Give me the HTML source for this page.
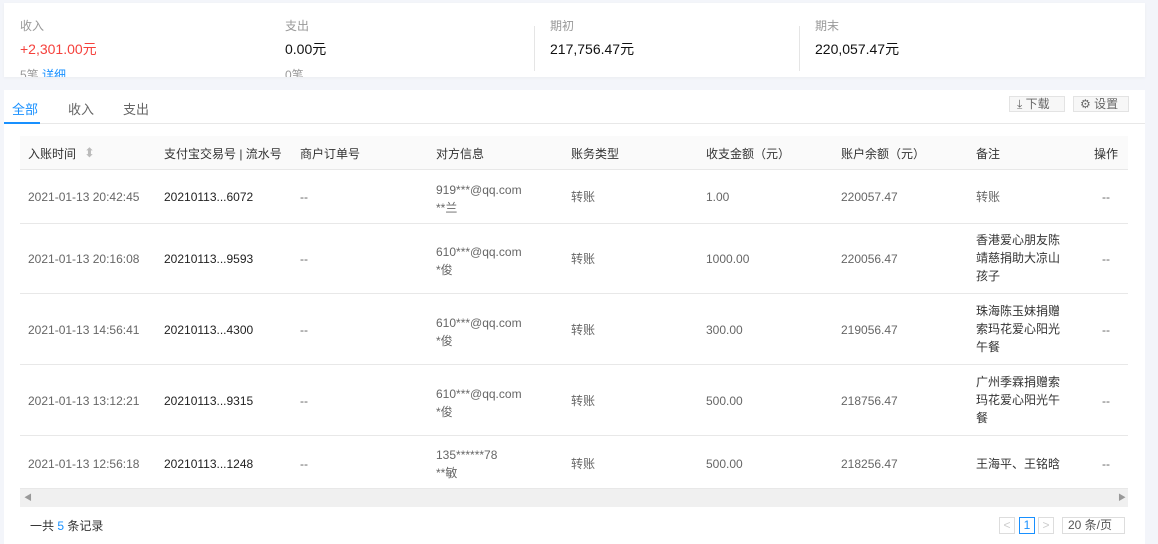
<!DOCTYPE html>
<html><head><meta charset="utf-8"><style>
*{margin:0;padding:0;box-sizing:border-box}
body{width:1158px;height:544px;background:#f3f5fa;font-family:"Liberation Sans","Noto Sans CJK SC",sans-serif;font-size:12px;color:#666;position:relative;overflow:hidden}
.a{position:absolute;white-space:nowrap}
.card{position:absolute;background:#fff}
.lbl{color:#999;font-size:12px}
.val{color:#111;font-size:14px}
.hd{color:#333;font-size:12px}
.k{color:#222}
.line{position:absolute;height:1px;background:#e8e8e8}
</style></head><body>
<div class="card" style="left:4px;top:3px;width:1141px;height:74px;overflow:hidden;box-shadow:0 1px 3px rgba(0,0,0,0.04)">
 <div class="a lbl" style="left:16px;top:14px">收入</div>
 <div class="a val" style="left:16px;top:36px;color:#f5413c">+2,301.00元</div>
 <div class="a lbl" style="left:16px;top:63px">5笔 <span style="color:#1890ff">详细</span></div>
 <div class="a lbl" style="left:281px;top:14px">支出</div>
 <div class="a val" style="left:281px;top:36px">0.00元</div>
 <div class="a lbl" style="left:281px;top:63px">0笔</div>
 <div style="position:absolute;left:530px;top:23px;width:1px;height:45px;background:#e5e5e5"></div>
 <div class="a lbl" style="left:546px;top:14px">期初</div>
 <div class="a val" style="left:546px;top:36px">217,756.47元</div>
 <div style="position:absolute;left:795px;top:23px;width:1px;height:45px;background:#e5e5e5"></div>
 <div class="a lbl" style="left:811px;top:14px">期末</div>
 <div class="a val" style="left:811px;top:36px">220,057.47元</div>
</div>
<div class="card" style="left:4px;top:90px;width:1141px;height:454px"></div>
<div class="a" style="left:12px;top:99px;font-size:13px;color:#1890ff">全部</div>
<div class="a" style="left:68px;top:99px;font-size:13px;color:#666">收入</div>
<div class="a" style="left:123px;top:99px;font-size:13px;color:#666">支出</div>
<div class="line" style="left:4px;top:123px;width:1141px"></div>
<div style="position:absolute;left:4px;top:122px;width:36px;height:2px;background:#1890ff"></div>
<div class="a" style="left:1009px;top:96px;width:56px;height:16px;border:1px solid #e3e3e3;background:#f7f7f7;font-size:12px;line-height:14px;padding-left:7px">⤓ 下载</div>
<div class="a" style="left:1073px;top:96px;width:56px;height:16px;border:1px solid #e3e3e3;background:#f7f7f7;font-size:12px;line-height:14px;padding-left:6px">⚙ 设置</div>
<div style="position:absolute;left:20px;top:136px;width:1108px;height:34px;background:#fafafa;border-bottom:1px solid #e8e8e8"></div>
<div class="a hd" style="left:28px;top:145px">入账时间</div>
<div class="a" style="left:84px;top:145px;color:#bbb;font-size:13px;line-height:16px">⬍</div>
<div class="a hd" style="left:164px;top:145px">支付宝交易号 | 流水号</div>
<div class="a hd" style="left:300px;top:145px">商户订单号</div>
<div class="a hd" style="left:436px;top:145px">对方信息</div>
<div class="a hd" style="left:571px;top:145px">账务类型</div>
<div class="a hd" style="left:706px;top:145px">收支金额（元）</div>
<div class="a hd" style="left:841px;top:145px">账户余额（元）</div>
<div class="a hd" style="left:976px;top:145px">备注</div>
<div class="a hd" style="left:1094px;top:145px">操作</div>

<div class="a" style="left:28px;top:190px">2021-01-13 20:42:45</div><div class="a k" style="left:164px;top:190px">20210113...6072</div><div class="a" style="left:300px;top:190px">--</div>
<div class="a" style="left:436px;top:181px;line-height:18px">919***@qq.com<br>**兰</div><div class="a" style="left:571px;top:188px">转账</div><div class="a" style="left:706px;top:190px">1.00</div><div class="a" style="left:841px;top:190px">220057.47</div><div class="a" style="left:976px;top:188px">转账</div><div class="a" style="left:1102px;top:190px">--</div>
<div class="line" style="left:20px;top:223px;width:1108px"></div>

<div class="a" style="left:28px;top:252px">2021-01-13 20:16:08</div><div class="a k" style="left:164px;top:252px">20210113...9593</div><div class="a" style="left:300px;top:252px">--</div>
<div class="a" style="left:436px;top:243px;line-height:18px">610***@qq.com<br>*俊</div><div class="a" style="left:571px;top:250px">转账</div><div class="a" style="left:706px;top:252px">1000.00</div><div class="a" style="left:841px;top:252px">220056.47</div><div class="a k" style="left:976px;top:231px;line-height:18px;color:#333">香港爱心朋友陈<br>靖慈捐助大凉山<br>孩子</div><div class="a" style="left:1102px;top:252px">--</div>
<div class="line" style="left:20px;top:293px;width:1108px"></div>

<div class="a" style="left:28px;top:323px">2021-01-13 14:56:41</div><div class="a k" style="left:164px;top:323px">20210113...4300</div><div class="a" style="left:300px;top:323px">--</div>
<div class="a" style="left:436px;top:314px;line-height:18px">610***@qq.com<br>*俊</div><div class="a" style="left:571px;top:321px">转账</div><div class="a" style="left:706px;top:323px">300.00</div><div class="a" style="left:841px;top:323px">219056.47</div><div class="a" style="left:976px;top:302px;line-height:18px;color:#333">珠海陈玉妹捐赠<br>索玛花爱心阳光<br>午餐</div><div class="a" style="left:1102px;top:323px">--</div>
<div class="line" style="left:20px;top:364px;width:1108px"></div>

<div class="a" style="left:28px;top:394px">2021-01-13 13:12:21</div><div class="a k" style="left:164px;top:394px">20210113...9315</div><div class="a" style="left:300px;top:394px">--</div>
<div class="a" style="left:436px;top:385px;line-height:18px">610***@qq.com<br>*俊</div><div class="a" style="left:571px;top:392px">转账</div><div class="a" style="left:706px;top:394px">500.00</div><div class="a" style="left:841px;top:394px">218756.47</div><div class="a" style="left:976px;top:373px;line-height:18px;color:#333">广州季霖捐赠索<br>玛花爱心阳光午<br>餐</div><div class="a" style="left:1102px;top:394px">--</div>
<div class="line" style="left:20px;top:435px;width:1108px"></div>

<div class="a" style="left:28px;top:457px">2021-01-13 12:56:18</div><div class="a k" style="left:164px;top:457px">20210113...1248</div><div class="a" style="left:300px;top:457px">--</div>
<div class="a" style="left:436px;top:446px;line-height:18px">135******78<br>**敏</div><div class="a" style="left:571px;top:455px">转账</div><div class="a" style="left:706px;top:457px">500.00</div><div class="a" style="left:841px;top:457px">218256.47</div><div class="a" style="left:976px;top:455px;color:#333">王海平、王铭晗</div><div class="a" style="left:1102px;top:457px">--</div>
<div class="line" style="left:20px;top:488px;width:1108px"></div>

<div style="position:absolute;left:20px;top:489px;width:1108px;height:18px;background:#f0f0f0"></div>
<div class="a" style="left:24px;top:492px;font-size:8px;color:#999">◀</div>
<div class="a" style="left:1118px;top:492px;font-size:8px;color:#999">▶</div>

<div class="a" style="left:30px;top:517px;color:#333">一共 <span style="color:#1890ff">5</span> 条记录</div>
<div class="a" style="left:999px;top:517px;width:16px;height:17px;border:1px solid #ddd;color:#ccc;text-align:center;line-height:15px">&lt;</div>
<div class="a" style="left:1019px;top:517px;width:16px;height:17px;border:1px solid #1890ff;color:#1890ff;text-align:center;line-height:15px">1</div>
<div class="a" style="left:1038px;top:517px;width:16px;height:17px;border:1px solid #ddd;color:#ccc;text-align:center;line-height:15px">&gt;</div>
<div class="a" style="left:1062px;top:517px;width:63px;height:17px;border:1px solid #ddd;color:#555;line-height:15px;padding-left:5px">20 条/页</div>
</body></html>
